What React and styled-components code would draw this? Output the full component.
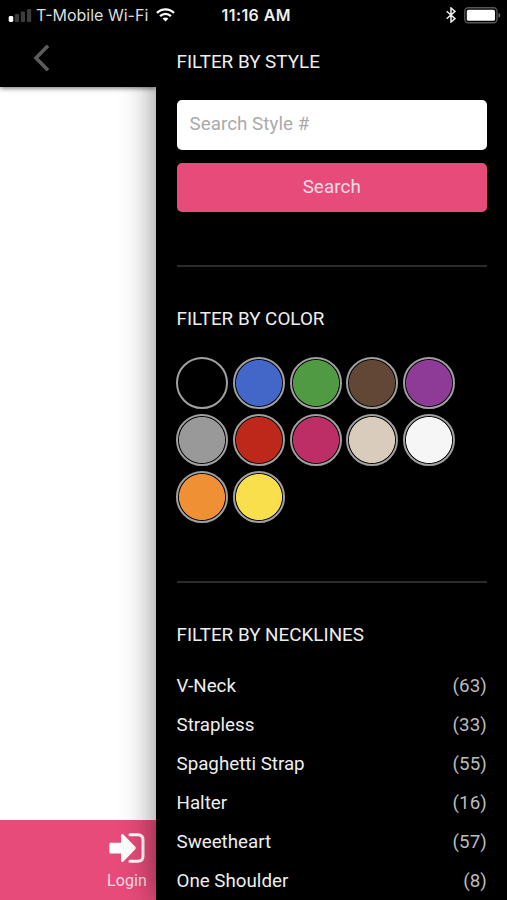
import React, { useState } from 'react';
import styled, { createGlobalStyle } from 'styled-components';

const colors = [
  { name: 'Black', value: '#000' },
  { name: 'Blue', value: '#4267c9' },
  { name: 'Green', value: '#4f9a43' },
  { name: 'Brown', value: '#624737' },
  { name: 'Purple', value: '#8d3b97' },
  { name: 'Gray', value: '#999' },
  { name: 'Red', value: '#bd281b' },
  { name: 'Pink', value: '#bd2e66' },
  { name: 'Nude', value: '#d9ccbd' },
  { name: 'White', value: '#f6f6f6' },
  { name: 'Orange', value: '#f09035' },
  { name: 'Yellow', value: '#f9df4b' },
]

const necklines = [
  { name: 'V-Neck', count: 63 },
  { name: 'Strapless', count: 33 },
  { name: 'Spaghetti Strap', count: 55 },
  { name: 'Halter', count: 16 },
  { name: 'Sweetheart', count: 57 },
  { name: 'One Shoulder', count: 8 },
]

function StatusBar() {
  return (
    <StatusWrapper>
      <Carrier>
        <svg width="24" height="13" viewBox="0 0 24 13">
          <rect x="0.7" y="7" width="4.6" height="6" rx="1.4" fill="#fff" />
          <rect x="6.8" y="5" width="4.2" height="8" rx="1" fill="#3c3c3c" />
          <rect x="12.8" y="2.5" width="4.2" height="10.5" rx="1" fill="#3c3c3c" />
          <rect x="19" y="0" width="4.2" height="13" rx="1" fill="#3c3c3c" />
        </svg>
        <CarrierName>T-Mobile Wi-Fi</CarrierName>
        <svg width="19" height="14" viewBox="0 0 19 14" fill="none" stroke="#fff" strokeWidth="2.3">
          <path d="M1 4.9C5.8.1 13.2.1 18 4.9" />
          <path d="M4.1 8.2C7.2 5.2 11.8 5.2 14.9 8.2" />
          <path d="M6.6 10.6C8.3 9 10.7 9 12.4 10.6L9.5 13.6Z" fill="#fff" stroke="none" />
        </svg>
      </Carrier>
      <Time>11:16 AM</Time>
      <Power>
        <svg width="10" height="16" viewBox="0 0 10 16" fill="none" stroke="#eee" strokeWidth="1.5">
          <path d="M.7 4.2L9 11.6L5 15V1L9 4.4L.7 11.8" />
        </svg>
        <svg width="37" height="17" viewBox="0 0 37 17">
          <rect x=".8" y=".8" width="32.2" height="15" rx="3.5" fill="none" stroke="#555" strokeWidth="1.4" />
          <rect x="2.8" y="2.8" width="28.2" height="11" rx="1.6" fill="#fff" />
          <path d="M34.5 6C36.9 6.7 36.9 10 34.5 10.7Z" fill="#666" />
        </svg>
      </Power>
    </StatusWrapper>
  )
}

function App() {
  const [style, setStyle] = useState('');

  return (
    <Screen>
      <GlobalStyle />
      <StatusBar />
      <Body>
        <Page>
          <Header>
            <svg width="17" height="28" viewBox="0 0 17 28" fill="none" stroke="#5c5c5c" strokeWidth="3.6">
              <path d="M15 1.8L3 14L15 26.2" />
            </svg>
          </Header>
          <Content />
          <Footer>
            <LoginTab>
              <svg width="36" height="31" viewBox="0 0 36 31">
                <path
                  d="M1.8 9.7H12V2.5C12 .9 13.3.5 14.4 1.6L26.3 13.8C27 14.6 27 15.4 26.3 16.2L14.4 28.4C13.3 29.5 12 29 12 27.5V20.5H1.8C.9 20.5.3 19.9.3 19V11.2C.3 10.3.9 9.7 1.8 9.7Z"
                  fill="#fff"
                />
                <path d="M21 1.8H28.8C32 1.8 34 3.7 34 6.8V23.3C34 26.4 32 28.3 28.8 28.3H21" fill="none" stroke="#fff" strokeWidth="3" strokeLinecap="round" />
              </svg>
              <LoginLabel>Login</LoginLabel>
            </LoginTab>
          </Footer>
        </Page>
        <Drawer>
          <StyleSection>
            <Title>FILTER BY STYLE</Title>
            <SearchInput placeholder="Search Style #" value={style} onChange={e => setStyle(e.target.value)} />
            <SearchButton>Search</SearchButton>
          </StyleSection>
          <ColorSection>
            <Title>FILTER BY COLOR</Title>
            <Swatches>
              { colors.map( color => <Swatch key={color.name} $color={color.value} aria-label={color.name} /> )}
            </Swatches>
          </ColorSection>
          <NecklineSection>
            <Title>FILTER BY NECKLINES</Title>
            <List>
              { necklines.map( item => (
                <Row key={item.name}>
                  <span>{item.name}</span>
                  <Count>({item.count})</Count>
                </Row>
              ))}
            </List>
          </NecklineSection>
        </Drawer>
      </Body>
    </Screen>
  )
}

const GlobalStyle = createGlobalStyle`
  * {
    box-sizing: border-box;
  }

  body {
    margin: 0;
    background: #000;
    font-family: Roboto, sans-serif;
  }

  svg {
    display: block;
    flex-shrink: 0;
  }
`

const Screen = styled.div`
  display: flex;
  flex-direction: column;
  width: 507px;
  height: 900px;
  overflow: hidden;
  background: #000;
`

const StatusWrapper = styled.div`
  display: grid;
  grid-template-columns: 1fr auto 1fr;
  align-items: center;
  height: 30px;
  padding: 0 6.5px 0 8px;
  color: #eee;
  font-family: Inter, sans-serif;
  font-size: 16px;
`

const Carrier = styled.div`
  display: flex;
  align-items: center;
`

const CarrierName = styled.span`
  margin: 0 8px 0 4px;
  color: #ddd;
  white-space: nowrap;
`

const Time = styled.span`
  padding-left: 4px;
  font-weight: 600;
  letter-spacing: 0.4px;
  white-space: nowrap;
`

const Power = styled.div`
  display: flex;
  align-items: center;
  justify-content: flex-end;
  gap: 8px;
`

const Body = styled.div`
  display: flex;
  flex: 1;
  min-height: 0;
`

const Page = styled.div`
  display: flex;
  flex-direction: column;
  width: 156px;
  background: #fff;
`

const Header = styled.div`
  height: 57px;
  padding: 14px 0 0 33px;
  background: #000;
  box-shadow: 0 1px 5px rgba(0, 0, 0, 0.6);
`

const Content = styled.div`
  flex: 1;
`

const Footer = styled.div`
  display: flex;
  justify-content: flex-end;
  height: 80px;
  padding: 13px 9px 0 0;
  background: #e74b7a;
`

const LoginTab = styled.div`
  display: flex;
  flex-direction: column;
  align-items: center;
`

const LoginLabel = styled.span`
  margin-top: 7px;
  color: #fbdde6;
  font-size: 16px;
  line-height: 20px;
  letter-spacing: 0.1px;
`

const Drawer = styled.div`
  flex: 1;
  padding: 0 20px 0 20.5px;
  background: #000;
  box-shadow: 0 0 32px rgba(0, 0, 0, 0.48);
  clip-path: inset(0 0 0 -60px);
  color: #eee;
  font-size: 18.75px;
`

const Section = styled.div`
  border-bottom: 2px solid #2b2b2b;
`

const StyleSection = styled(Section)`
  height: 237px;
  padding-top: 21px;
`

const ColorSection = styled(Section)`
  height: 316px;
  padding-top: 41px;
`

const NecklineSection = styled.div`
  padding-top: 41px;
`

const Title = styled.h2`
  margin: 0;
  font-size: 18.85px;
  font-weight: 400;
  line-height: 22px;
`

const SearchInput = styled.input`
  display: block;
  width: 100%;
  height: 50px;
  margin-top: 27px;
  padding: 0 13px 3px;
  border: 0;
  border-radius: 5px;
  background: #fff;
  font-family: inherit;
  font-size: 18.75px;
  letter-spacing: 0.05px;

  &::placeholder {
    color: #aaa;
  }
`

const SearchButton = styled.button`
  display: block;
  width: 100%;
  height: 49px;
  margin-top: 13px;
  padding: 0 0 2px;
  border: 0;
  border-radius: 5px;
  background: #e74b7a;
  color: #fbdde6;
  font-family: inherit;
  font-size: 18.75px;
  letter-spacing: 0.1px;
`

const Swatches = styled.div`
  display: flex;
  flex-wrap: wrap;
  gap: 4.8px;
  margin: 27px 0 0 -0.5px;
`

const Swatch = styled.button`
  width: 52px;
  height: 52px;
  padding: 0;
  border: 2px solid #a0a0a0;
  border-radius: 50%;
  background: radial-gradient(circle, ${props => props.$color} 22.6px, #000 23.4px) border-box;
`

const List = styled.ul`
  margin: 20.4px 0 0;
  padding: 0;
  list-style: none;
`

const Row = styled.li`
  display: flex;
  align-items: center;
  justify-content: space-between;
  height: 39.1px;
`

const Count = styled.span`
  color: #bbb;
  letter-spacing: 0.1px;
`

export default App;
